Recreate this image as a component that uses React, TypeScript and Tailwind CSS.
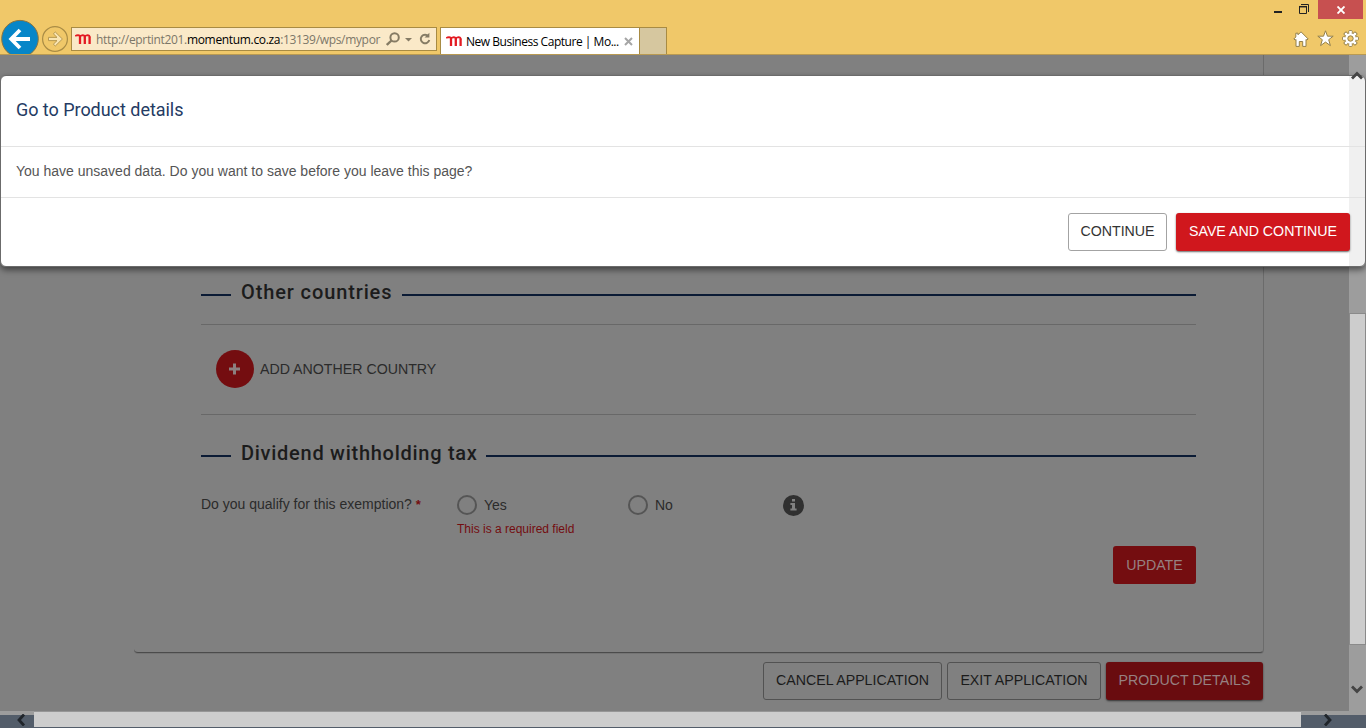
import React from "react";

const BrandMark = () => (
  <svg width="16" height="11" viewBox="0 0 16 11" fill="none" stroke="#e31b23" className="shrink-0">
    <path d="M.2 2.2Q1 1.2 3 1.2Q5.2 1.3 5.2 3.2M5 3.2Q5.6 1.2 7.6 1.2Q9.8 1.3 9.8 3.4M9.8 3.2Q10.4 1.2 12.4 1.2Q14.7 1.3 14.7 3.4" strokeWidth="1.7" />
    <path d="M5 2V10M9.8 2.4V10M14.6 2.4V10" strokeWidth="2.3" />
  </svg>
);

const Chevron = ({ d, className = "" }: { d: string; className?: string }) => (
  <svg width="12" height="12" viewBox="0 0 12 12" fill="none" stroke="currentColor" strokeWidth="2.8" className={className}>
    <path d={d} />
  </svg>
);

const GEAR_ANGLES = [0, 45, 90, 135, 180, 225, 270, 315];

const Gear = () => (
  <svg width="17" height="17" viewBox="0 0 17 17">
    {GEAR_ANGLES.map((a) => (
      <rect key={a} x="6.9" y="0.6" width="3.2" height="4" rx=".5" fill="#fff" stroke="#94804a" strokeWidth="1" transform={`rotate(${a} 8.5 8.5)`} />
    ))}
    <circle cx="8.5" cy="8.5" r="5.5" fill="#fff" stroke="#94804a" strokeWidth=".6" />
    {GEAR_ANGLES.map((a) => (
      <rect key={a} x="7.4" y="1.1" width="2.2" height="4" fill="#fff" transform={`rotate(${a} 8.5 8.5)`} />
    ))}
    <circle cx="8.5" cy="8.5" r="2.7" fill="#f0c869" stroke="#94804a" strokeWidth="1" />
  </svg>
);

function BrowserBar() {
  return (
    <header className="flex h-[55px] shrink-0 justify-between border-b border-[#b99a52] bg-[#f0c869]">
      <div className="flex items-start overflow-hidden">
        <svg width="71" height="54" viewBox="0 0 71 54" className="shrink-0">
          <circle cx="20" cy="38.7" r="18.3" fill="#0786c8" stroke="#8a7440" strokeWidth="1" />
          <path d="M30 39H12M20 30L11.2 39L20 48" fill="none" stroke="#fff" strokeWidth="3.8" />
          <circle cx="55" cy="39" r="12.4" fill="none" stroke="#a98c45" strokeWidth="1.2" />
          <path d="M48.5 37.4H57L53.4 33.8L55.3 32L62.4 39L55.3 46L53.4 44.2L57 40.6H48.5Z" fill="#f9e5b2" stroke="#b0934c" strokeWidth=".9" />
        </svg>
        <div className="mt-[27px] flex h-6 w-[366px] shrink-0 items-center border border-[#a88b43] bg-[#fae9c8] pl-[3px]">
          <BrandMark />
          <div className="ml-[5px] w-[290px] whitespace-nowrap pt-[2px] font-['Open_Sans',sans-serif] text-[12px] leading-[22px] tracking-[-0.33px] text-[#7c7768]">
            http://eprtint201.<span className="text-black">momentum.co.za</span>:13139/wps/mypor
          </div>
          <svg width="50" height="16" viewBox="0 0 50 16" fill="none" stroke="#857b64" className="shrink-0">
            <circle cx="8.6" cy="6.4" r="4.2" strokeWidth="2" />
            <path d="M5.5 9.5L.8 14" strokeWidth="2.4" />
            <path d="M19 7H26L22.5 10.6Z" fill="#857b64" stroke="none" />
            <path d="M42.4 5.2A4.3 4.3 0 1 0 43.3 9" strokeWidth="1.9" />
            <path d="M43.4 1.8V6.6H38.6Z" fill="#857b64" stroke="none" />
          </svg>
        </div>
        <div className="ml-[3px] mt-[27px] flex h-[27px] w-[200px] shrink-0 items-center border border-b-0 border-[#a88b43] bg-white pl-[5px]">
          <BrandMark />
          <span className="ml-[4px] w-[155px] whitespace-nowrap pt-[2px] font-['Open_Sans',sans-serif] text-[12px] tracking-[-0.47px] text-black">New Business Capture | Mo...</span>
          <svg width="9" height="9" viewBox="0 0 9 9" stroke="#a5a5a5" strokeWidth="2" className="ml-[3px]">
            <path d="M1 1L8 8M8 1L1 8" />
          </svg>
        </div>
        <div className="mt-[27px] h-[27px] w-[27px] shrink-0 border border-b-0 border-l-0 border-[#a88b43] bg-[#d6c79f]" />
      </div>
      <div className="flex w-[100px] flex-col">
        <div className="flex h-[19px]">
          <svg width="52" height="19" viewBox="0 0 52 19" fill="none" stroke="#222">
            <path d="M8 12H16" strokeWidth="2" />
            <path d="M33.5 6.5H40.5V13.5H33.5ZM35 4.5H42.5V12" strokeWidth="1" />
            <path d="M33 6.7H41" strokeWidth="1.5" />
          </svg>
          <div className="flex w-[45px] items-center justify-center bg-[#c75050]">
            <svg width="8" height="8" viewBox="0 0 8 8" stroke="#fff" strokeWidth="1.9">
              <path d="M.5 .5L7.5 7.5M7.5 .5L.5 7.5" />
            </svg>
          </div>
        </div>
        <div className="flex items-center gap-[8px] pl-[27px] pt-[11px]">
          <svg width="16" height="16" viewBox="0 0 16 16" fill="#fff" stroke="#94804a" strokeWidth="1">
            <path d="M8 .8L15.2 8L13.8 9L13 8.4V15.4H9.7V10.5H6.3V15.4H3V8.4L2.2 9L.8 8L2.8 6V2.2H5V3.8Z" />
          </svg>
          <svg width="17" height="17" viewBox="0 0 17 17" fill="#fff" stroke="#94804a" strokeWidth="1">
            <path d="M8.5 .8L10.5 6.2H16.2L11.7 9.7L13.4 15.6L8.5 12.1L3.6 15.6L5.3 9.7L.8 6.2H6.5Z" />
          </svg>
          <Gear />
        </div>
      </div>
    </header>
  );
}

const SectionTitle = ({ title, tracking }: { title: string; tracking: string }) => (
  <div className="flex h-[32px] items-center">
    <span className="mt-[6px] h-[2px] w-[30px] bg-[#0b1b35]" />
    <h2 className={`ml-[10px] whitespace-nowrap font-['Roboto',sans-serif] text-[20px] font-medium leading-[32px] text-[#1c1c1c] ${tracking}`}>{title}</h2>
    <span className="mt-[6px] h-[2px] flex-1 bg-[#0b1b35]" />
  </div>
);

const Button = ({ children, className }: { children: React.ReactNode; className: string }) => (
  <button className={`flex h-[38px] shrink-0 items-center justify-center whitespace-nowrap rounded-[3px] text-[14.2px] ${className}`}>{children}</button>
);

const Radio = ({ label, className }: { label: string; className: string }) => (
  <label className={`flex items-center gap-[7px] ${className}`}>
    <span className="h-5 w-5 rounded-full border-2 border-[#555]" />
    <span className="pt-px">{label}</span>
  </label>
);

function TaxPage() {
  return (
    <main className="flex h-[656px] w-[1349px] flex-col bg-[#808080] pl-[134px]">
      <section className="h-[598px] w-[1130px] shrink-0 rounded-b-[4px] border-b border-r border-b-[#4b4b4b] border-r-[#6b6b6b] pl-[67px] pr-[67px] pt-[221px] text-[14px] text-[#2b2b2b] shadow-[0_1px_0_#747474]">
        <SectionTitle title="Other countries" tracking="mr-[10px] tracking-[0.88px]" />
        <div className="mt-[16px] flex h-[91px] items-center border-y border-[#686868] pl-[15px]">
          <span className="mb-[2px] flex h-[38px] w-[38px] items-center justify-center rounded-full bg-[#740d10]">
            <svg width="12" height="12" viewBox="0 0 12 12" stroke="#8c8080" strokeWidth="3">
              <path d="M5.5 .5V11.5M0 6H11" />
            </svg>
          </span>
          <span className="ml-[6px] text-[14.2px]">ADD ANOTHER COUNTRY</span>
        </div>
        <div className="mt-[22px]">
          <SectionTitle title="Dividend withholding tax" tracking="mr-[8px] tracking-[0.73px]" />
        </div>
        <div className="mt-[26px] flex h-[20px] items-center">
          <span className="w-[256px] whitespace-nowrap pb-[2px]">
            Do you qualify for this exemption? <span className="text-[13px] font-bold text-[#740d10]">*</span>
          </span>
          <Radio label="Yes" className="w-[171px]" />
          <Radio label="No" className="w-[155px]" />
          <span className="flex h-[21px] w-[21px] items-center justify-center rounded-full bg-[#303030]">
            <svg width="9" height="12" viewBox="0 0 9 12" fill="#808080">
              <path d="M3 0H6V2.4H3ZM1.4 4H6V9.6H7.6V11.6H1.4V9.6H3V6H1.4Z" />
            </svg>
          </span>
        </div>
        <p className="ml-[256px] mt-[5px] text-[12px] leading-[18px] text-[#740d10]">This is a required field</p>
        <div className="mt-[8px] flex justify-end">
          <Button className="w-[83px] bg-[#740d10] pt-[2px] text-[#968181]">UPDATE</Button>
        </div>
      </section>
      <div className="mt-[9px] flex w-[1129px] justify-end gap-[5px]">
        <Button className="w-[179px] border border-[#525252] text-[#1b1b1b]">CANCEL APPLICATION</Button>
        <Button className="w-[154px] border border-[#525252] text-[#1b1b1b]">EXIT APPLICATION</Button>
        <Button className="w-[157px] bg-[#690c0f] text-[#968181] shadow-[0_1px_2px_#333]">PRODUCT DETAILS</Button>
      </div>
    </main>
  );
}

function UnsavedDialog() {
  return (
    <div role="dialog" className="absolute left-0 top-[20px] h-[192px] w-[1366px] rounded-[6px] border border-[#6b6b6b] bg-[linear-gradient(to_right,#fff_1348px,#f0f0f0_1348px)] shadow-[0_3px_6px_rgba(0,0,0,0.5)]">
      <div className="h-[71px] border-b border-[#e3e3e3] pl-[15px] pt-[20px] font-['Roboto',sans-serif] text-[18px] leading-[28px] tracking-[-0.04px] text-[#243b63]">Go to Product details</div>
      <div className="h-[51px] border-b border-[#e3e3e3] pl-[15px] pt-[14px] text-[14px] leading-[20px] text-[#555]">You have unsaved data. Do you want to save before you leave this page?</div>
      <div className="flex justify-end gap-[9px] pr-[15px] pt-[15px]">
        <Button className="w-[99px] border border-[#a3a3a3] bg-white pb-px text-[#333]">CONTINUE</Button>
        <Button className="w-[174px] bg-[#d0171d] pb-px text-white shadow-[0_1px_2px_#666]">SAVE AND CONTINUE</Button>
      </div>
    </div>
  );
}

export default function App() {
  return (
    <div className="flex h-[728px] w-[1366px] flex-col overflow-hidden font-['Liberation_Sans',Arial,sans-serif]">
      <BrowserBar />
      <div className="relative h-[673px]">
        <div className="flex h-[656px]">
          <TaxPage />
          <div className="flex w-[17px] flex-col bg-[#9d9d9d] pt-[258px]">
            <div className="h-[332px] border border-[#8a8a8a] bg-[#cdcdcd]" />
            <Chevron d="M1 3.5L6 8.5L11 3.5" className="ml-[2px] mt-[38px] text-[#444]" />
          </div>
        </div>
        <div className="flex h-[17px] bg-[linear-gradient(#9d9d9d_4px,#535d6a_4px)]">
          <div className="w-[34px] pl-[15px] pt-[3px] text-[#20252b]">
            <Chevron d="M9 0.5L4 6L9 11.5" />
          </div>
          <div className="w-[1267px] border-b border-t border-b-[#535d6a] border-t-[#969696] bg-[#cdcdcd]" />
          <div className="pl-[21px] pt-[3px] text-[#20252b]">
            <Chevron d="M3 0.5L8 6L3 11.5" />
          </div>
        </div>
        <UnsavedDialog />
        <Chevron d="M1 8.5L6 3.5L11 8.5" className="absolute left-[1351px] top-[15px] text-[#444]" />
      </div>
    </div>
  );
}
